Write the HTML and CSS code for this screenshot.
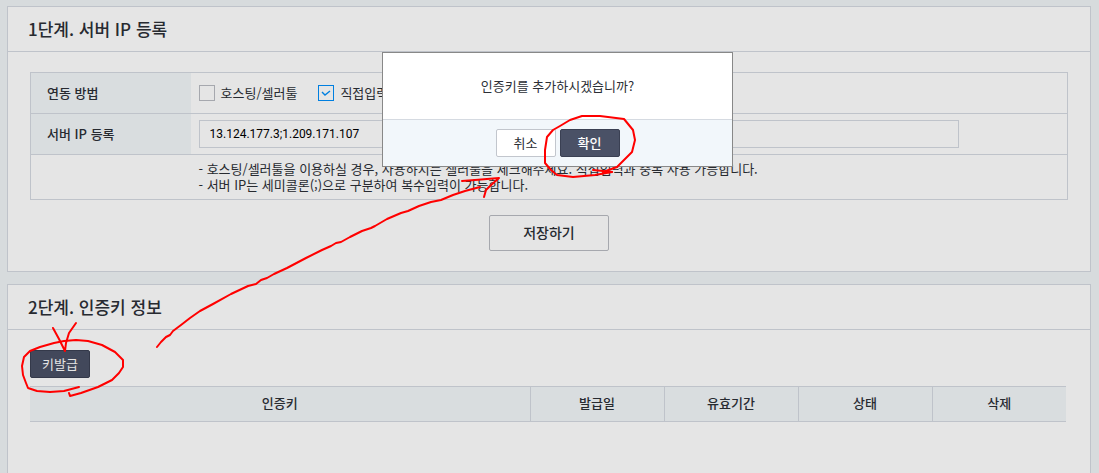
FILE: index.html
```html
<!DOCTYPE html>
<html lang="ko">
<head>
  <meta charset="UTF-8">
  <meta name="viewport" content="width=device-width, initial-scale=1.0">
  <title>인증키 관리</title>
  <link rel="stylesheet" href="styles.css">
</head>
<body>
  <section class="card">
    <h2>1단계. 서버 IP 등록</h2>
    <form class="card-body">
      <table class="form-table">
        <tr>
          <th scope="row">연동 방법</th>
          <td>
            <div class="checks">
              <label class="check"><input type="checkbox">호스팅/셀러툴</label>
              <label class="check"><input type="checkbox" checked>직접입력</label>
            </div>
          </td>
        </tr>
        <tr>
          <th scope="row"><label for="server-ip">서버 IP 등록</label></th>
          <td><input class="ip-input" type="text" id="server-ip" value="13.124.177.3;1.209.171.107"></td>
        </tr>
        <tr>
          <td class="blank"></td>
          <td class="help">
            - 호스팅/셀러툴을 이용하실 경우, 사용하시는 셀러툴을 체크해주세요. 직접입력과 중복 사용 가능합니다.<br>
            - 서버 IP는 세미콜론(;)으로 구분하여 복수입력이 가능합니다.
          </td>
        </tr>
      </table>
      <button type="button" class="save-btn">저장하기</button>
    </form>
  </section>

  <section class="card card-last">
    <h2>2단계. 인증키 정보</h2>
    <div class="card-body">
      <button type="button" class="btn btn-dark">키발급</button>
      <div class="key-list">
        <table class="key-table">
          <thead>
            <tr>
              <th class="key-col">인증키</th>
              <th>발급일</th>
              <th>유효기간</th>
              <th>상태</th>
              <th>삭제</th>
            </tr>
          </thead>
        </table>
      </div>
    </div>
  </section>

  <div class="overlay">
    <div class="modal" role="dialog" aria-modal="true">
      <p>인증키를 추가하시겠습니까?</p>
      <div class="modal-footer">
        <button type="button" class="btn">취소</button>
        <button type="button" class="btn btn-dark btn-ok">확인</button>
      </div>
    </div>
  </div>

  <!-- hand-drawn guide marks -->
  <svg class="marks" width="1099" height="473" viewBox="0 0 1099 473" aria-hidden="true">
    <path d="M157 347L161 342L166 337L170 335L173 331L181 325L190 318L200 311L213 304L231 294L248 286L256 284L261 280L267 278L274 274L287 268L306 258L322 250L331 246L336 243L341 242L350 237L362 231L371 228L375 226L387 219L401 213L408 211L419 206L431 202L441 200L453 195L465 191L480 187"/>
    <path d="M462 181L475 180L499 178L490 186L486 190L484 197"/>
    <path d="M79 387L64 391L50 392L37 391L28 388L26 383L23 375L22 366L24 357L30 351L40 347L54 343L64 341L76 340L88 341L102 345L115 352L123 360L123 367L119 373L112 380L98 387L81 393L70 396L69 393"/>
    <path d="M53 328L59 339L65 351L66 343L69 333L76 323"/>
    <path d="M593 170L603 171L612 172"/>
    <path d="M612 172L595 175L573 177L557 175L551 170L545 163L545 150L547 137L553 130L560 126L570 120L582 116L600 116L624 119L633 130L635 140L632 152L617 167L603 172"/>
  </svg>
</body>
</html>
```
FILE: styles.css
```css
* {
  box-sizing: border-box;
}
body {
  margin: 0;
  padding: 6px 8px 0 7px;
  min-height: 100vh;
  display: flex;
  flex-direction: column;
  gap: 12px;
  background-color: #f0f4f7;
  color: #2c2f36;
  font-family: 'Noto Sans CJK KR', sans-serif;
  font-size: 13px;
  line-height: 16px;
}
button, input {
  font-family: inherit;
  font-size: 13px;
  color: inherit;
}
.card {
  background-color: #fff;
  border: 1px solid #d5dae1;
}
.card-last {
  flex: 1;
  border-bottom: none;
}
h2 {
  margin: 0;
  padding: 0 20px;
  font-size: 17px;
  font-weight: 500;
  line-height: 44px;
  border-bottom: 1px solid #d5dae1;
}
.card-body {
  padding: 20px 22px;
}
table {
  width: 100%;
  border-collapse: collapse;
}
th {
  background-color: #f2f6f9;
  font-weight: 500;
}

/* server form */
.form-table {
  border: 1px solid #d5dae1;
}
.form-table tr {
  height: 41px;
  border-bottom: 1px solid #d5dae1;
}
.form-table th {
  width: 160px;
  padding: 0 16px;
  text-align: left;
}
.form-table td {
  padding: 0 8px;
}
.form-table .help {
  padding: 6px 8px;
}
.checks {
  display: flex;
  gap: 21px;
}
.check {
  display: flex;
  align-items: center;
  gap: 6px;
}
.check input {
  appearance: none;
  width: 16px;
  height: 16px;
  margin: 0;
  border: 1px solid #b9bcc2;
  background-color: #fff;
}
.check input:checked {
  border-color: #008efa;
  background: #fff url("data:image/svg+xml,%3Csvg xmlns='http://www.w3.org/2000/svg' viewBox='0 0 14 14'%3E%3Cpath d='M3 6l3 3 5-4' fill='none' stroke='%23008efa' stroke-width='1.4'/%3E%3C/svg%3E");
}
.ip-input {
  display: block;
  width: 100%;
  max-width: 760px;
  height: 28px;
  padding: 0 10px;
  border: 1px solid #d5dae1;
  background-color: #fff;
  color: #000;
  font-family: Roboto, 'Noto Sans CJK KR', sans-serif;
  font-size: 12px;
}
.save-btn {
  display: block;
  width: 120px;
  height: 36px;
  margin: 15px auto 0;
  padding: 0 0 2px;
  background-color: #fff;
  border: 1px solid #b9bcc2;
  border-radius: 2px;
  font-size: 14px;
  font-weight: 500;
}

/* buttons */
.btn {
  width: 60px;
  height: 28px;
  padding: 0 0 2px;
  background-color: #fff;
  border: 1px solid #c2c6cd;
  border-radius: 2px;
}
.btn-dark {
  background-color: #4a5166;
  border-color: #3a4053;
  color: #fff;
}
.btn-ok {
  font-weight: 500;
}

/* key list */
.key-list {
  padding: 8px 2px 0 0;
}
.key-table {
  table-layout: fixed;
}
.key-table th {
  width: 134px;
  height: 35px;
  padding: 0 0 2px;
  border: 1px solid #d5dae1;
}
.key-table th:first-child {
  border-left: none;
}
.key-table th:last-child {
  border-right: none;
}
.key-table .key-col {
  width: auto;
}

/* confirm dialog */
.overlay {
  position: fixed;
  inset: 0;
  display: flex;
  justify-content: center;
  align-items: flex-start;
  padding: 52px 0 0 16px;
  background-color: rgba(0, 0, 0, 0.1);
}
.modal {
  width: 351px;
  background-color: #fff;
  border: 1px solid #888;
}
.modal p {
  margin: 0;
  padding: 25px 0;
  text-align: center;
}
.modal-footer {
  display: flex;
  justify-content: center;
  gap: 4px;
  padding: 9px 0;
  background-color: #f2f7fb;
  border-top: 1px solid #d5dae1;
}

.marks {
  position: absolute;
  top: 0;
  left: 0;
  fill: none;
  stroke: #f00;
  stroke-width: 2;
  stroke-linecap: round;
  stroke-linejoin: round;
  pointer-events: none;
}
```
